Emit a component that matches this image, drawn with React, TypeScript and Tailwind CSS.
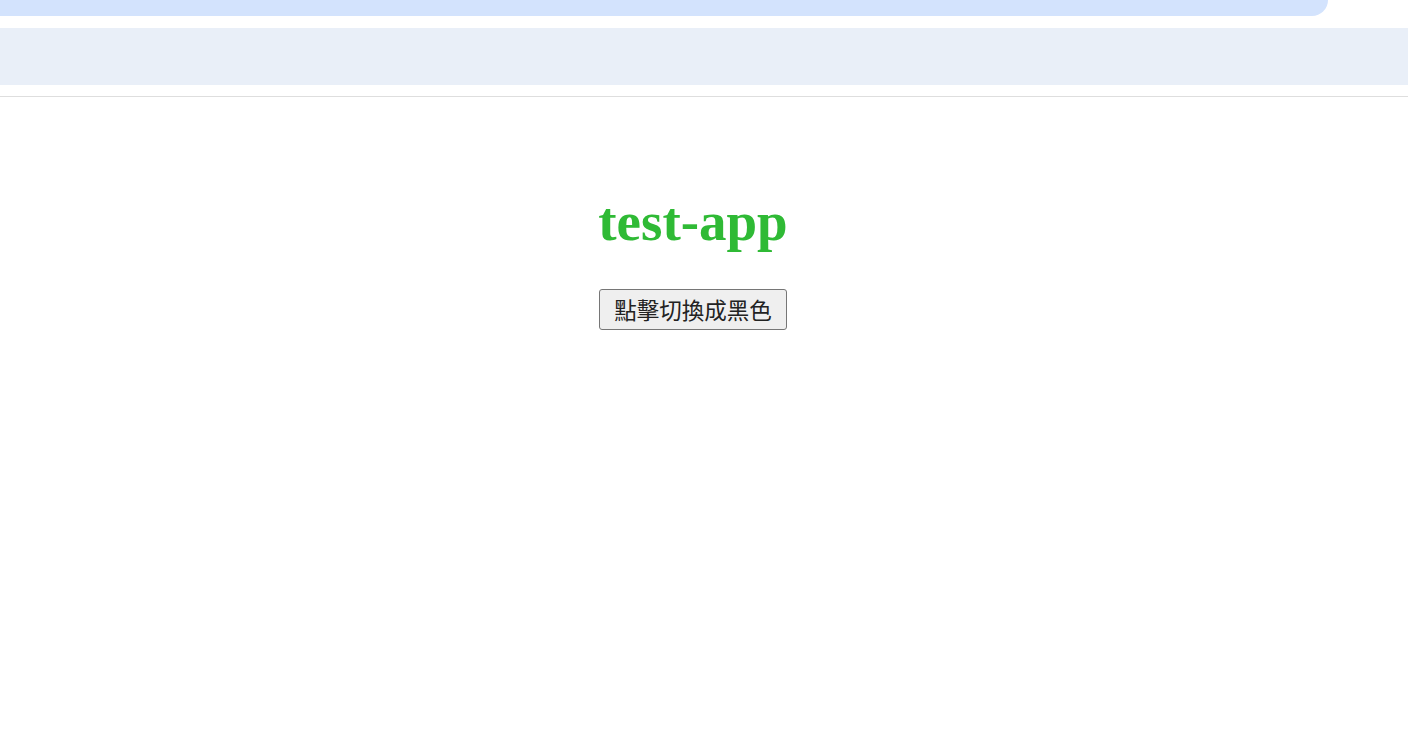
import { useState } from "react";

export default function App() {
  const [dark, setDark] = useState(false);

  return (
    <div className="min-h-[748px] bg-white">
      {/* browser chrome remnants */}
      <div className="h-4 w-[1328px] rounded-br-[16px] bg-[#d3e3fd]" />
      <div className="mt-3 h-[57px] bg-[#e9eff8]" />
      <div className="mt-[11px] h-px bg-[#dedede]" />

      <div className="w-[1386px] pt-[93px] text-center">
        <h1
          className={`font-['Liberation_Serif','Times_New_Roman',serif] text-[55px] font-bold leading-[63px] ${
            dark ? "text-black" : "text-[#2fba35]"
          }`}
        >
          test-app
        </h1>
        <button
          type="button"
          onClick={() => setDark(!dark)}
          className="mt-[36px] h-[41px] w-[188px] rounded-[3px] border border-[#767676] bg-[#efefef] font-['Noto_Sans_CJK_TC',sans-serif] text-[22.5px] leading-none text-[#222]"
        >
          {dark ? "點擊切換成綠色" : "點擊切換成黑色"}
        </button>
      </div>
    </div>
  );
}
